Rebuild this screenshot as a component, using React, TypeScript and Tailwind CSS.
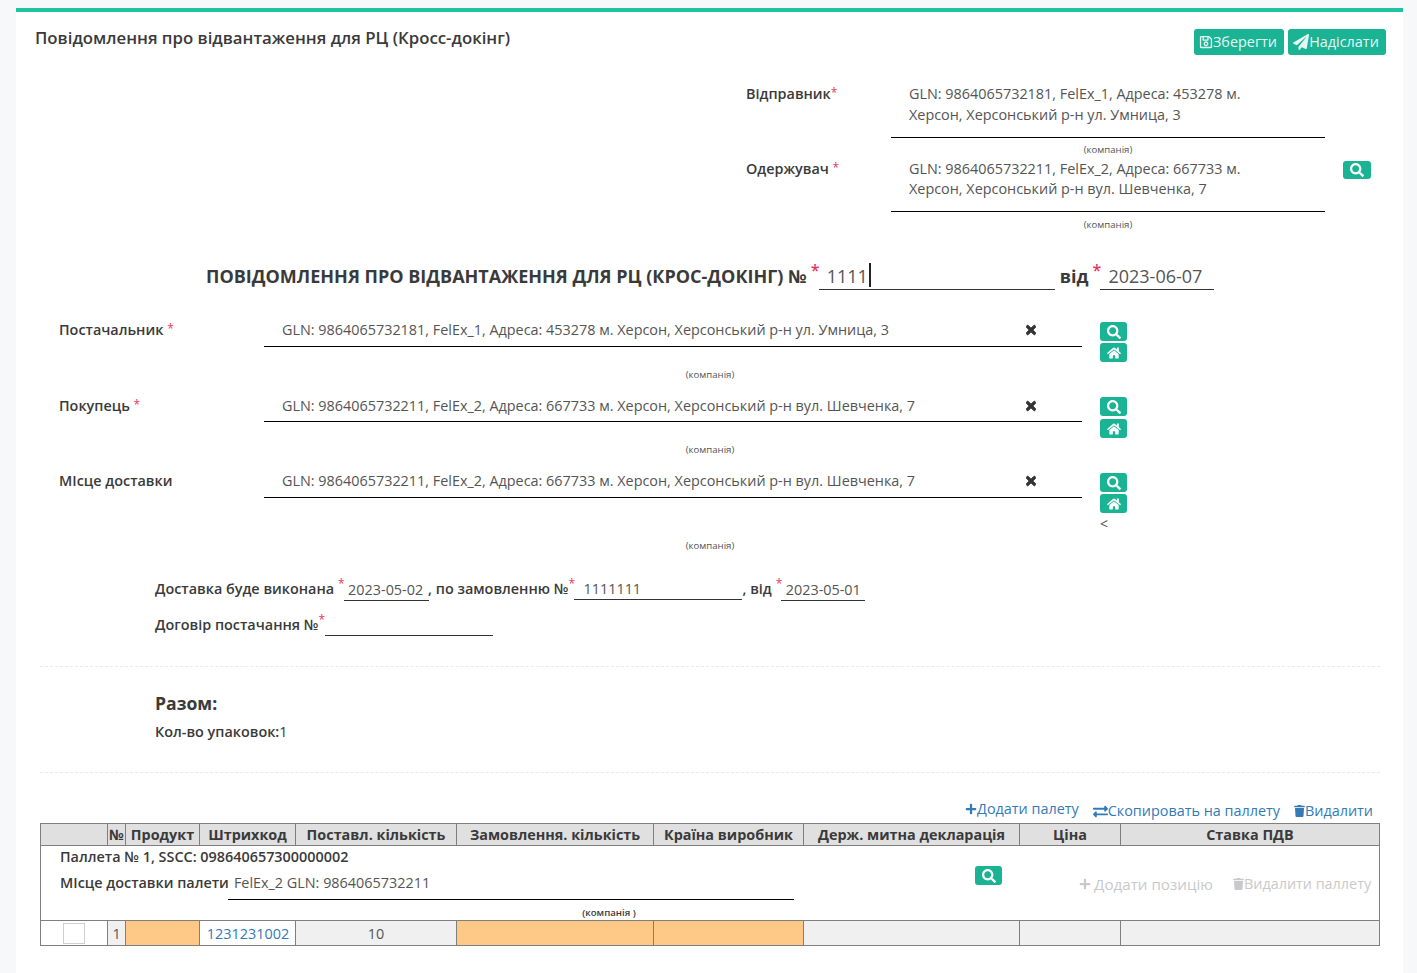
import { FaSearch, FaHome, FaTimes, FaPlus, FaExchangeAlt, FaTrash, FaPaperPlane, FaRegSave } from 'react-icons/fa'

const tealBtn = 'flex items-center justify-center rounded-[3px] bg-[#1ab394] text-white'

function Star({ className = '' }: { className?: string }) {
  return <sup className={`text-[#e8375f] text-[12px] font-normal leading-none top-[-2px] ${className}`}>*</sup>
}

function Company({ className = '' }: { className?: string }) {
  return <div className={`text-[9.6px] leading-[12px] text-[#555] ${className}`}>(компанія)</div>
}

function PartyRow({ label, star, value, tall, nudge, children }: { label: string; star?: boolean; value: string; tall?: boolean; nudge?: boolean; children?: React.ReactNode }) {
  return (
    <div className={`flex ${tall ? 'h-[62px]' : 'h-[41px]'}`}>
      <div className={`w-[224px] pl-[19px] text-[14.4px] leading-[16px] font-semibold text-[#3a3a3a] ${nudge ? 'pt-[1px]' : ''}`}>
        {label} {star && <Star />}
      </div>
      <div className={`w-[818px] h-[25px] border-b border-black pl-[18px] pr-[46px] flex justify-between text-[14.4px] leading-[16px] text-[#555] ${nudge ? 'pt-[1px]' : ''}`}>
        <span>{value}</span>
        <FaTimes className="text-[#333] w-[10px] h-[14px] mt-[1px]" stroke="currentColor" strokeWidth={36} />
      </div>
      <div className={`ml-[18px] w-[27px] flex flex-col ${nudge ? 'gap-[3px]' : 'gap-[2px]'}`}>
        <div className={`${tealBtn} h-[19px]`}><FaSearch className="w-[14px] h-[14px]" /></div>
        <div className={`${tealBtn} h-[19px]`}><FaHome className="w-[14px] h-[14px]" /></div>
        {children}
      </div>
    </div>
  )
}

function App() {
  return (
    <div className="min-h-[973px] bg-[#f7f8fa] pl-4 pr-[14px] pt-2 font-['Open_Sans',sans-serif] text-[#3a3a3a]">
      <div className="min-h-[965px] border-t-4 border-[#1fc3a2] bg-white">
        <div className="flex items-start justify-between pl-[19px] pr-[17px] pt-[17px]">
          <h1 className="-mt-[1px] text-[16.8px] leading-[20px] font-semibold text-[#3a3a3a]">Повідомлення про відвантаження для РЦ (Кросс-докінг)</h1>
          <div className="flex gap-[4px]">
            <button className="flex h-[26px] w-[90px] items-center justify-center rounded-[3px] bg-[#1ab394] pr-[2px] text-[14.4px] text-[#e6f7f3]"><FaRegSave className="w-[14px] h-[14px]" />Зберегти</button>
            <button className="flex h-[26px] w-[98px] items-center justify-center rounded-[3px] bg-[#1ab394] pr-[2px] text-[14.4px] text-[#e6f7f3]"><FaPaperPlane className="w-[16px] h-[16px]" />Надіслати</button>
          </div>
        </div>

        <div className="mt-[29px] flex">
          <div className="w-[875px] pl-[730px] text-[14.4px] leading-[20px] font-semibold whitespace-nowrap">Відправник<Star /></div>
          <div className="w-[434px] h-[54px] border-b border-black pl-[18px] pr-[70px] text-[14.4px] leading-[20.5px] text-[#555]">GLN: 9864065732181, FelEx_1, Адреса: 453278 м. Херсон, Херсонський р-н ул. Умница, 3</div>
        </div>
        <div className="ml-[875px] w-[434px] h-[21px] pt-[6px] text-center"><Company /></div>
        <div className="flex">
          <div className="w-[875px] pl-[730px] text-[14.4px] leading-[20px] font-semibold whitespace-nowrap">Одержувач <Star /></div>
          <div className="w-[434px] h-[53px] border-b border-black pl-[18px] pr-[70px] text-[14.4px] leading-[20px] text-[#555]">GLN: 9864065732211, FelEx_2, Адреса: 667733 м. Херсон, Херсонський р-н вул. Шевченка, 7</div>
          <div className={`${tealBtn} ml-[18px] mt-[2px] h-[18px] w-[28px]`}><FaSearch className="w-[14px] h-[14px]" /></div>
        </div>
        <div className="ml-[875px] w-[434px] pt-[7px] text-center"><Company /></div>

        <div className="mt-[27px] flex h-[34px] pl-[190px]">
          <div className="pt-[6px] text-[18px] leading-[25px] font-bold whitespace-nowrap">ПОВІДОМЛЕННЯ ПРО ВІДВАНТАЖЕННЯ ДЛЯ РЦ (КРОС-ДОКІНГ) №</div>
          <Star className="ml-[4px] mt-[6px] h-[10px] w-[8px] text-[16px] font-semibold" />
          <div className="flex h-[32px] w-[236px] border-b border-[#333] pl-[8px] pt-[6px] text-[18px] leading-[25px] text-[#555]">
            1111<span className="ml-[1px] -mt-[1px] h-[24px] w-[2px] bg-[#222]" />
          </div>
          <div className="ml-[5px] pt-[6px] text-[18px] leading-[25px] font-bold">від</div>
          <Star className="ml-[4px] mt-[6px] h-[10px] w-[8px] text-[16px] font-semibold" />
          <div className="h-[32px] w-[114px] border-b border-[#333] pl-[8px] pt-[6px] text-[18px] leading-[25px] text-[#555]">2023-06-07</div>
        </div>

        <div className="ml-[24px] mr-[23px]">
          <div className="mt-[30px]">
            <PartyRow label="Постачальник" star value="GLN: 9864065732181, FelEx_1, Адреса: 453278 м. Херсон, Херсонський р-н ул. Умница, 3" />
            <div className="h-[34px] pt-[6px] text-center"><Company /></div>
            <PartyRow label="Покупець" star nudge value="GLN: 9864065732211, FelEx_2, Адреса: 667733 м. Херсон, Херсонський р-н вул. Шевченка, 7" />
            <div className="h-[35px] pt-[6px] text-center"><Company /></div>
            <PartyRow label="МІсце доставки" tall value="GLN: 9864065732211, FelEx_2, Адреса: 667733 м. Херсон, Херсонський р-н вул. Шевченка, 7">
              <div className="mt-[1px] text-[14px] leading-[16px] text-[#555]">&lt;</div>
            </PartyRow>
            <div className="h-[22px] pt-[5px] text-center"><Company /></div>
          </div>

          <div className="ml-[115px] mt-[19px] text-[14.4px] font-semibold">
            <div className="flex h-[36px] items-start leading-[20px]">
              <span className="pt-[3px]">Доставка буде виконана</span>
              <Star className="ml-[4px] mt-[4px] h-[10px] w-[6px]" />
              <div className="h-[25px] w-[85px] border-b border-[#333] pl-[4px] pt-[4px] font-normal text-[#555]">2023-05-02</div>
              <span className="-ml-[1px] pt-[3px]">, по замовленню №</span>
              <Star className="mt-[4px] h-[10px] w-[6px]" />
              <div className="h-[24px] w-[168px] border-b border-[#333] pl-[9px] pt-[3px] font-normal text-[#555]">1111111</div>
              <span className="pt-[3px]">, від</span>
              <Star className="ml-[4px] mt-[4px] h-[10px] w-[5px]" />
              <div className="h-[25px] w-[84px] border-b border-[#333] pl-[5px] pt-[4px] font-normal text-[#555]">2023-05-01</div>
            </div>
            <div className="flex h-[24px] items-start leading-[20px]">
              <span className="pt-[3px]">Договір постачання №</span>
              <Star className="mt-[4px] h-[10px] w-[6px]" />
              <div className="ml-[1px] h-[24px] w-[168px] border-b border-[#333]" />
            </div>
          </div>

          <div className="mt-[30px] border-t border-dashed border-[#e7eaec]" />
          <div className="ml-[115px] mt-[24px] text-[17.6px] leading-[24px] font-bold">Разом:</div>
          <div className="ml-[115px] mt-[7px] text-[14.4px] leading-[20px] font-semibold">Кол-во упаковок:<span className="font-normal">1</span></div>
          <div className="mt-[30px] border-t border-dashed border-[#e7eaec]" />

          <div className="mt-[26px] flex h-[24px] justify-end gap-[14px] pr-[7px] pt-[2px] text-[14.4px] leading-[20px] text-[#337ab7]">
            <span className="flex items-center -mt-[2px] h-[20px]"><FaPlus className="w-[12px] h-[12px]" />Додати палету</span>
            <span className="flex items-center h-[20px]"><FaExchangeAlt className="w-[15px] h-[15px]" />Скопировать на паллету</span>
            <span className="flex items-center h-[20px]"><FaTrash className="w-[11px] h-[12px]" />Видалити</span>
          </div>

          <table className="w-[1339px] table-fixed border-collapse text-[14.4px] leading-[20px]">
            <colgroup>
              <col className="w-[67px]" /><col className="w-[18px]" /><col className="w-[74px]" /><col className="w-[96px]" /><col className="w-[161px]" /><col className="w-[197px]" /><col className="w-[150px]" /><col className="w-[216px]" /><col className="w-[101px]" /><col className="w-[259px]" />
            </colgroup>
            <thead>
              <tr className="h-[22px] bg-[#e0e0e0]">
                {['', '№', 'Продукт', 'Штрихкод', 'Поставл. кількість', 'Замовлення. кількість', 'Країна виробник', 'Держ. митна декларація', 'Ціна', 'Ставка ПДВ'].map((h, i) => (
                  <th key={i} className="overflow-hidden border border-[#7f7f7f] p-0 text-center font-bold whitespace-nowrap text-[#3a3a3a]">{h}</th>
                ))}
              </tr>
            </thead>
            <tbody>
              <tr>
                <td colSpan={10} className="h-[75px] border border-[#7f7f7f] p-0 align-top">
                  <div className="flex h-[74px]">
                    <div className="w-[934px] pl-[19px] pt-[1px] font-semibold">
                      <div className="leading-[20px]">Паллета № 1, SSCC: 098640657300000002</div>
                      <div className="mt-[6px] flex h-[34px]">
                        <span>МІсце доставки палети</span>
                        <div className="-ml-[1px] h-[27px] w-[566px] border-b border-black pl-[6px] font-normal text-[#555]">FelEx_2 GLN: 9864065732211</div>
                      </div>
                      <div className="ml-[168px] w-[566px] pl-[196px] text-center text-[9.6px] leading-[12px] font-semibold">(компанія )</div>
                    </div>
                    <div className={`${tealBtn} mt-[20px] h-[19px] w-[27px]`}><FaSearch className="w-[14px] h-[14px]" /></div>
                    <div className="ml-[77px] mt-[28px] flex h-[20px] gap-[20px] font-normal whitespace-nowrap text-[#c9c9c9]">
                      <span className="flex items-center gap-[3px] text-[15.2px]"><FaPlus className="w-[12px] h-[12px]" />Додати позицію</span>
                      <span className="flex items-center"><FaTrash className="w-[11px] h-[12px]" />Видалити паллету</span>
                    </div>
                  </div>
                </td>
              </tr>
              <tr className="h-[25px] text-center">
                <td className="border border-[#7f7f7f] bg-white p-0"><div className="mx-auto h-[21px] w-[22px] border border-[#cfcfcf] bg-white" /></td>
                <td className="border border-[#7f7f7f] bg-[#f0f0f0] p-0 pt-[1px] text-[#555]">1</td>
                <td className="border border-[#7f7f7f] bg-[#fec986] p-0" />
                <td className="border border-[#7f7f7f] bg-white p-0 pt-[1px] pl-[1px] text-[#337ab7]">1231231002</td>
                <td className="border border-[#7f7f7f] bg-[#f0f0f0] p-0 pt-[1px] text-[#555]">10</td>
                <td className="border border-[#7f7f7f] bg-[#fec986] p-0" />
                <td className="border border-[#7f7f7f] bg-[#fec986] p-0" />
                <td className="border border-[#7f7f7f] bg-[#f0f0f0] p-0" />
                <td className="border border-[#7f7f7f] bg-[#f0f0f0] p-0" />
                <td className="border border-[#7f7f7f] bg-[#f0f0f0] p-0" />
              </tr>
            </tbody>
          </table>
        </div>
      </div>
    </div>
  )
}

export default App
